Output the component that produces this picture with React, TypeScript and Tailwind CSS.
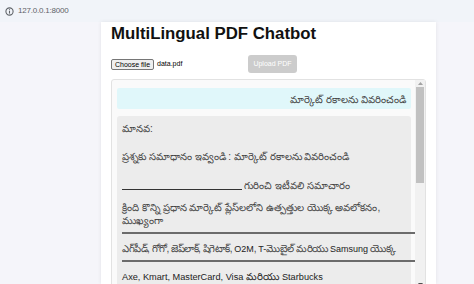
import React from "react";

export default function App() {
  return (
    <div className="w-[474px] h-[284px] overflow-hidden bg-[#f5f5fa] font-['Liberation_Sans',Arial,sans-serif]">
      {/* address bar */}
      <div className="h-[22px] bg-[#f1f4f9] flex items-center pl-[5px] gap-[4px] text-[#5f6368]">
        <svg width="9" height="9" viewBox="0 0 10 10" className="shrink-0">
          <circle cx="5" cy="5" r="4" fill="none" stroke="#5f6368" strokeWidth="1.2" />
          <rect x="4.4" y="4.3" width="1.2" height="3" fill="#5f6368" />
          <rect x="4.4" y="2.5" width="1.2" height="1.1" fill="#5f6368" />
        </svg>
        <span className="text-[8px] tracking-[-0.2px]">127.0.0.1:8000</span>
      </div>

      <div className="ml-[101px] w-[335px] h-[262px] bg-white shadow-[0_0_4px_rgba(0,0,0,0.08)] px-[10px] overflow-hidden">
        <h1 className="text-[16.8px] leading-[22px] font-bold text-[#111] pt-[1px]">
          MultiLingual PDF Chatbot
        </h1>

        <div className="flex items-center mt-[10px] h-[18px]">
          <div className="w-[137px] flex items-center gap-[3px]">
            <span className="h-[11px] px-[3px] border border-[#767676] rounded-[2px] bg-[#efefef] text-[7px] leading-[9px] text-black">
              Choose file
            </span>
            <span className="text-[7px] text-black">data.pdf</span>
          </div>
          <button className="h-[18px] w-[49px] rounded-[3px] bg-[#cccccc] text-white text-[7px]">
            Upload PDF
          </button>
        </div>

        <div className="mt-[6px] h-[210px] border border-[#e2e2e2] rounded-[3px] bg-[#fafafa] flex">
          <div className="flex-1 pl-[5px] pt-[8px] flex flex-col gap-[7px] min-w-0 text-[#444] text-[10px]">
            <div className="h-[21px] shrink-0 bg-[#e0f7fa] rounded-[2px] flex items-center justify-end pr-[5px] pt-[1px]">
              మార్కెట్ రకాలను వివరించండి
            </div>
            <div className="bg-[#ececec] rounded-[3px] pl-[5px] pt-[6px] pb-[4px]">
              <p className="leading-[13px]">మానవ:</p>
              <p className="leading-[13px] mt-[15px]">ప్రశ్నకు సమాధానం ఇవ్వండి : మార్కెట్ రకాలను వివరించండి</p>
              <p className="leading-[13px] mt-[16px] flex items-end">
                <span className="inline-block w-[120px] border-b border-[#333] mb-[2px] mr-[2px]" />
                గురించి ఇటీవలి సమాచారం
              </p>
              <p className="leading-[13px] mt-[9px] pr-[20px]">
                క్రింది కొన్ని ప్రధాన మార్కెట్ ప్లేస్‌లలోని ఉత్పత్తుల యొక్క అవలోకనం, ముఖ్యంగా
              </p>
              <hr className="border-0 border-t-[2px] border-[#6b6b6b] mt-[5px] -mr-[5px]" />
              <p className="leading-[13px] mt-[8px] whitespace-nowrap tracking-[-0.5px]">
                ఎగ్‌పీడ్, గోగో, జెప్‌లాక్, షిగెటాక్, <span className="text-[#222] text-[9px] tracking-normal">O2M</span>,{" "}
                <span className="text-[9px] text-[#222] tracking-normal">T-</span>మొబైల్ మరియు{" "}
                <span className="text-[9px] text-[#222] tracking-normal">Samsung</span> యొక్క
              </p>
              <hr className="border-0 border-t-[2px] border-[#6b6b6b] mt-[4px] -mr-[5px]" />
              <p className="leading-[13px] mt-[8px] text-[#222]">
                <span className="text-[9.2px]">Axe, Kmart, MasterCard, Visa</span> మరియు{" "}
                <span className="text-[9.2px]">Starbucks</span>
              </p>
            </div>
          </div>
          <div className="w-[10px] ml-[4px] bg-[#f1f1f1] flex flex-col items-center">
            <div className="h-[7px] flex items-center justify-center">
              <svg width="5" height="3" viewBox="0 0 5 3">
                <path d="M0 3 L2.5 0 L5 3 Z" fill="#a3a3a3" />
              </svg>
            </div>
            <div className="w-[8px] h-[96px] bg-[#c1c1c1]" />
            <div className="flex-1" />
            <div className="h-[7px] flex items-center justify-center">
              <svg width="5" height="3" viewBox="0 0 5 3">
                <path d="M0 0 L5 0 L2.5 3 Z" fill="#505050" />
              </svg>
            </div>
          </div>
        </div>
      </div>
    </div>
  );
}
